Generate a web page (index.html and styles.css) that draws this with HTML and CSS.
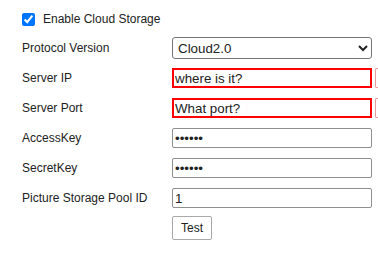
FILE: index.html
```html
<!DOCTYPE html>
<html lang="en">
<head>
    <meta charset="UTF-8">
    <title>Cloud Storage</title>
    <link rel="stylesheet" href="styles.css">
</head>
<body>
    <form class="settings">
        <label class="enable">
            <input type="checkbox" checked>
            <span>Enable Cloud Storage</span>
        </label>

        <div class="row">
            <span class="name">Protocol Version</span>
            <select class="field">
                <option>Cloud2.0</option>
                <option>Cloud1.0</option>
            </select>
        </div>
        <div class="row">
            <span class="name">Server IP</span>
            <input class="field error" type="text" value="where is it?">
            <span class="tip"></span>
        </div>
        <div class="row">
            <span class="name">Server Port</span>
            <input class="field error" type="text" value="What port?">
            <span class="tip"></span>
        </div>
        <div class="row">
            <span class="name">AccessKey</span>
            <input class="field" type="password" value="123456">
        </div>
        <div class="row">
            <span class="name">SecretKey</span>
            <input class="field" type="password" value="123456">
        </div>
        <div class="row">
            <span class="name">Picture Storage Pool ID</span>
            <input class="field" type="text" value="1">
        </div>
        <div class="row">
            <span class="name"></span>
            <button type="button" class="btn">Test</button>
        </div>
    </form>
</body>
</html>
```
FILE: styles.css
```css
body {
    margin: 0;
    background: #ffffff;
    font-family: "Liberation Sans", Arial, sans-serif;
    font-size: 12px;
    color: #222222;
    overflow: hidden;
}
.settings {
    padding: 5px 0 0 22px;
}
.enable {
    display: flex;
    align-items: center;
    height: 28px;
    gap: 8px;
}
.enable input {
    margin: 0;
    width: 13px;
    height: 13px;
}
.row {
    display: flex;
    align-items: center;
    height: 30px;
}
.name {
    width: 150px;
    flex-shrink: 0;
}
.field {
    box-sizing: border-box;
    width: 200px;
    height: 20px;
    margin: 0;
    padding: 0 2px;
    border: 1px solid #8f8f8f;
    border-radius: 2px;
    font-family: "Liberation Sans", Arial, sans-serif;
    font-size: 13.33px;
    color: #222222;
    background: #ffffff;
}
select.field {
    height: 22px;
    border-color: #767676;
    border-radius: 3px;
    padding: 0 1px;
}
.field.error {
    border: 2px solid #ff0000;
    border-radius: 0;
    padding: 0 1px;
}
/* error bubble, cut off by the window edge */
.tip {
    box-sizing: border-box;
    width: 3px;
    height: 20px;
    margin-left: 3px;
    border: 1px solid #e99a9a;
    border-right: 0;
    border-radius: 2px 0 0 2px;
}
.btn {
    box-sizing: border-box;
    width: 40px;
    height: 24px;
    margin: 0;
    padding: 0;
    border: 1px solid #a9a9a9;
    border-radius: 2px;
    background: #ffffff;
    font-family: "Liberation Sans", Arial, sans-serif;
    font-size: 12px;
    color: #222222;
}
```
